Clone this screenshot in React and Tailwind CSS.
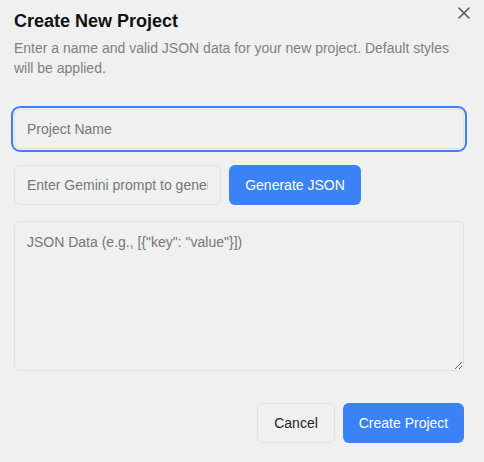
import React from "react";

export default function App() {
  const font = { fontFamily: '"Liberation Sans", Arial, sans-serif' };
  return (
    <div
      className="relative w-[484px] h-[462px] bg-[#f0f0f0] overflow-hidden"
      style={font}
    >
      <button className="absolute left-[458px] top-[7px] w-[12px] h-[12px] flex items-center justify-center text-[#555]">
        <svg width="12" height="12" viewBox="0 0 12 12" fill="none">
          <path d="M1 1L11 11M11 1L1 11" stroke="#555" strokeWidth="1.5" strokeLinecap="round" />
        </svg>
      </button>
      <div className="flex flex-col pl-[14px] pr-[20px] pt-[7px]">
        <h2 className="text-[18px] leading-[28px] font-bold text-[#111]">Create New Project</h2>
        <p className="mt-[3px] text-[14px] leading-[20px] text-[#808080]">
          Enter a name and valid JSON data for your new project. Default styles will be applied.
        </p>
        <input
          className="mt-[31px] h-[40px] w-full rounded-[6px] border border-[#e2e2e2] bg-[#f0f0f0] px-[12px] text-[14px] text-[#222] placeholder:text-[#777] outline-none ring-2 ring-[#3b82f6] ring-offset-1 ring-offset-[#f0f0f0]"
          style={font}
          placeholder="Project Name"
          autoFocus
        />
        <div className="mt-[16px] flex gap-[8px]">
          <input
            className="h-[40px] w-[207px] rounded-[6px] border border-[#e2e2e2] bg-[#f0f0f0] px-[12px] text-[14px] text-[#222] placeholder:text-[#777] outline-none"
            style={font}
            placeholder="Enter Gemini prompt to generate JSON"
          />
          <button className="h-[40px] w-[132px] rounded-[6px] bg-[#3b82f6] text-[14px] text-white">
            Generate JSON
          </button>
        </div>
        <textarea
          className="mt-[16px] h-[150px] w-full rounded-[6px] border border-[#e2e2e2] bg-[#f0f0f0] px-[12px] py-[10px] text-[14px] leading-[20px] text-[#222] placeholder:text-[#777] outline-none"
          style={font}
          placeholder={'JSON Data (e.g., [{"key": "value"}])'}
        />
        <div className="mt-[32px] flex justify-end gap-[8px]">
          <button className="h-[40px] w-[78px] rounded-[6px] border border-[#e2e2e2] text-[14px] text-[#222]">
            Cancel
          </button>
          <button className="h-[40px] w-[121px] rounded-[6px] bg-[#3b82f6] text-[14px] text-white">
            Create Project
          </button>
        </div>
      </div>
    </div>
  );
}
